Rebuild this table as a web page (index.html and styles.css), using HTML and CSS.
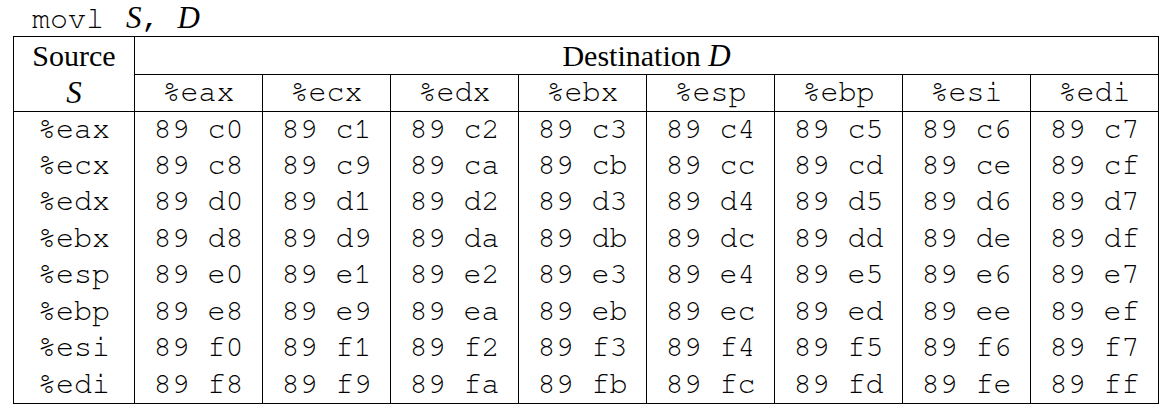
FILE: index.html
```html
<!DOCTYPE html>
<html>
<head>
<meta charset="utf-8">
<link rel="stylesheet" href="styles.css">
</head>
<body>
<div class="page">
  <div class="title"><span class="mono">movl </span><i class="math s">S</i><span class="mono">, </span><i class="math">D</i></div>
  <table class="enc">
    <colgroup>
      <col class="c-src">
      <col class="c-dst"><col class="c-dst"><col class="c-dst"><col class="c-dst">
      <col class="c-dst"><col class="c-dst"><col class="c-dst"><col class="c-dst">
    </colgroup>
    <thead>
      <tr class="h1">
        <th rowspan="2" class="src-head"><div>Source</div><div><i class="math">S</i></div></th>
        <th colspan="8" class="dst-head">Destination <i class="math">D</i></th>
      </tr>
      <tr class="h2">
        <th>%eax</th><th>%ecx</th><th>%edx</th><th>%ebx</th><th>%esp</th><th>%ebp</th><th>%esi</th><th>%edi</th>
      </tr>
    </thead>
    <tbody>
      <tr class="first"><td>%eax</td><td>89 c0</td><td>89 c1</td><td>89 c2</td><td>89 c3</td><td>89 c4</td><td>89 c5</td><td>89 c6</td><td>89 c7</td></tr>
      <tr><td>%ecx</td><td>89 c8</td><td>89 c9</td><td>89 ca</td><td>89 cb</td><td>89 cc</td><td>89 cd</td><td>89 ce</td><td>89 cf</td></tr>
      <tr><td>%edx</td><td>89 d0</td><td>89 d1</td><td>89 d2</td><td>89 d3</td><td>89 d4</td><td>89 d5</td><td>89 d6</td><td>89 d7</td></tr>
      <tr><td>%ebx</td><td>89 d8</td><td>89 d9</td><td>89 da</td><td>89 db</td><td>89 dc</td><td>89 dd</td><td>89 de</td><td>89 df</td></tr>
      <tr><td>%esp</td><td>89 e0</td><td>89 e1</td><td>89 e2</td><td>89 e3</td><td>89 e4</td><td>89 e5</td><td>89 e6</td><td>89 e7</td></tr>
      <tr><td>%ebp</td><td>89 e8</td><td>89 e9</td><td>89 ea</td><td>89 eb</td><td>89 ec</td><td>89 ed</td><td>89 ee</td><td>89 ef</td></tr>
      <tr><td>%esi</td><td>89 f0</td><td>89 f1</td><td>89 f2</td><td>89 f3</td><td>89 f4</td><td>89 f5</td><td>89 f6</td><td>89 f7</td></tr>
      <tr><td>%edi</td><td>89 f8</td><td>89 f9</td><td>89 fa</td><td>89 fb</td><td>89 fc</td><td>89 fd</td><td>89 fe</td><td>89 ff</td></tr>
    </tbody>
  </table>
</div>
</body>
</html>
```

FILE: styles.css
```css
html, body {
  margin: 0;
  padding: 0;
  background: #ffffff;
  color: #000000;
}

.page {
  padding-left: 13px;
}

.title {
  height: 36px;
  line-height: 36px;
  padding-left: 19px;
  white-space: pre;
  font-family: "Nimbus Mono PS", "Nimbus Mono L", "FreeMono", "Courier", "Liberation Mono", monospace;
  font-size: 30px;
}

.mono {
  font-family: "Nimbus Mono PS", "Nimbus Mono L", "FreeMono", "Courier", "Liberation Mono", monospace;
  white-space: pre;
}

.math {
  font-family: "Liberation Serif", "Times New Roman", serif;
  font-style: italic;
  font-size: 31px;
}

.title .s {
  margin-left: 4px;
}

.enc {
  border-collapse: collapse;
  table-layout: fixed;
  width: 1145px;
}

.c-src { width: 121px; }
.c-dst { width: 128px; }

.enc th,
.enc td {
  border: 1px solid #000;
  padding: 0;
  text-align: center;
  vertical-align: middle;
  font-weight: normal;
}

.enc .h1 { height: 38px; }
.enc .h2 { height: 37px; }

.src-head,
.dst-head {
  font-family: "Liberation Serif", "Times New Roman", serif;
  font-size: 30px;
}

.src-head div {
  line-height: 37px;
}

.dst-head {
  padding-bottom: 3px;
}

.h2 th,
.enc td {
  font-family: "Nimbus Mono PS", "Nimbus Mono L", "FreeMono", "Courier", "Liberation Mono", monospace;
  font-size: 30px;
  white-space: pre;
}

.h2 th {
  padding-bottom: 2px;
}

.enc tbody td {
  border-top: none;
  border-bottom: none;
  padding-bottom: 3px;
}

.enc tbody tr {
  height: 36.5px;
}

.enc tbody tr:last-child td {
  border-bottom: 1px solid #000;
}
```
